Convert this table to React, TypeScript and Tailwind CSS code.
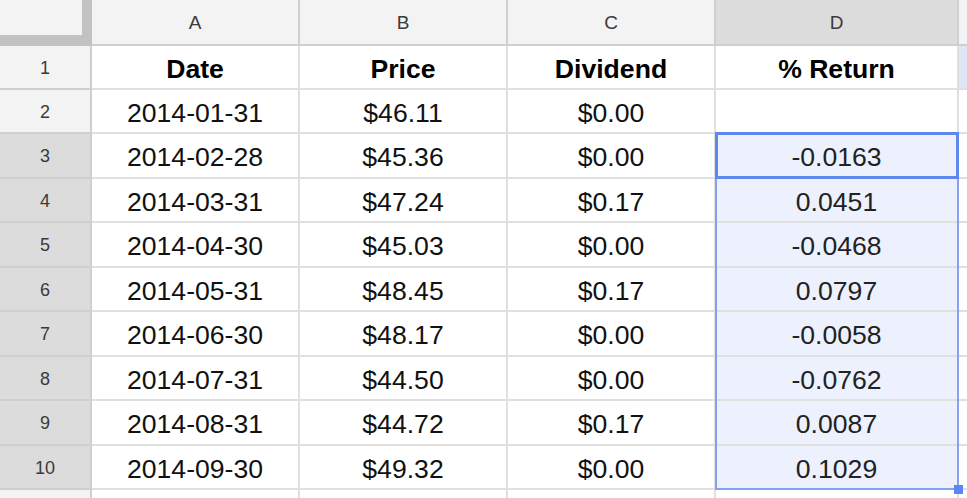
import React from "react";

type Row = {
  n: number;
  cells: string[];
  h: string;
};

const rows: Row[] = [
  { n: 1, cells: ["Date", "Price", "Dividend", "% Return"], h: "h-[44px]" },
  { n: 2, cells: ["2014-01-31", "$46.11", "$0.00", ""], h: "h-[44px]" },
  { n: 3, cells: ["2014-02-28", "$45.36", "$0.00", "-0.0163"], h: "h-[45px]" },
  { n: 4, cells: ["2014-03-31", "$47.24", "$0.17", "0.0451"], h: "h-[44px]" },
  { n: 5, cells: ["2014-04-30", "$45.03", "$0.00", "-0.0468"], h: "h-[45px]" },
  { n: 6, cells: ["2014-05-31", "$48.45", "$0.17", "0.0797"], h: "h-[44px]" },
  { n: 7, cells: ["2014-06-30", "$48.17", "$0.00", "-0.0058"], h: "h-[45px]" },
  { n: 8, cells: ["2014-07-31", "$44.50", "$0.00", "-0.0762"], h: "h-[44px]" },
  { n: 9, cells: ["2014-08-31", "$44.72", "$0.17", "0.0087"], h: "h-[45px]" },
  { n: 10, cells: ["2014-09-30", "$49.32", "$0.00", "0.1029"], h: "h-[44px]" },
];

const colWidths = ["w-[208px]", "w-[208px]", "w-[208px]", "w-[243px]"];
const colLetters = ["A", "B", "C", "D"];

export default function App() {
  return (
    <div
      className="relative h-[498px] w-[967px] overflow-hidden bg-white"
      style={{ fontFamily: '"Liberation Sans", Arial, sans-serif' }}
    >
      {/* column headers */}
      <div className="flex h-[46px]">
        <div className="h-[46px] w-[92px] shrink-0 bg-[#c2c2c2]">
          <div className="h-[35px] w-[82px] bg-[#f3f3f3]" />
        </div>
        {colLetters.map((letter, i) => (
          <div
            key={letter}
            className={`${colWidths[i]} flex shrink-0 items-center justify-center border-b-2 border-r-2 border-[#cfcfcf] pt-[2px] text-[19px] text-[#3a3a3a] ${
              letter === "D" ? "bg-[#dcdcdc]" : "bg-[#f3f3f3]"
            }`}
          >
            {letter}
          </div>
        ))}
        <div className="flex-1 border-b-2 border-[#cfcfcf] bg-[#f3f3f3]" />
      </div>

      {rows.map((row) => (
        <div key={row.n} className={`flex ${row.h}`}>
          <div
            className={`flex w-[92px] shrink-0 items-center justify-center border-b-2 border-r-2 border-[#cfcfcf] pt-[2px] text-[18px] text-[#3a3a3a] ${
              row.n >= 3 ? "bg-[#dcdcdc]" : "bg-[#f3f3f3]"
            }`}
          >
            {row.n}
          </div>
          {row.cells.map((text, i) => (
            <div
              key={i}
              className={`${colWidths[i]} flex shrink-0 items-center justify-center border-b-2 border-r-2 border-[#e0e0e0] pt-[5px] text-[26.6px] ${
                row.n === 1 ? "font-bold text-black" : "text-[#111]"
              } ${i === 3 && row.n >= 3 ? "bg-[#edf1fd] text-[#222]" : ""}`}
            >
              {text}
            </div>
          ))}
          <div
            className={`flex-1 border-b-2 border-[#e0e0e0] ${row.n === 1 ? "bg-[#dfe6f4]" : ""}`}
          />
        </div>
      ))}

      {/* row 11, partly visible */}
      <div className="flex h-[20px]">
        <div className="w-[92px] shrink-0 border-r-2 border-[#cfcfcf] bg-[#f3f3f3]" />
        {colWidths.map((w, i) => (
          <div key={i} className={`${w} shrink-0 border-r-2 border-[#e0e0e0]`} />
        ))}
        <div className="flex-1" />
      </div>

      {/* selection range D3:D10 */}
      <div className="pointer-events-none absolute left-[715px] top-[132px] h-[358px] w-[244px] border-2 border-[#86a1f1]" />
      {/* active cell D3 */}
      <div className="pointer-events-none absolute left-[715px] top-[132px] h-[47px] w-[244px] border-[3px] border-[#5f87f0]" />
      {/* fill handle */}
      <div className="absolute left-[954px] top-[485px] h-[9px] w-[9px] bg-[#5b86f3]" />
    </div>
  );
}
